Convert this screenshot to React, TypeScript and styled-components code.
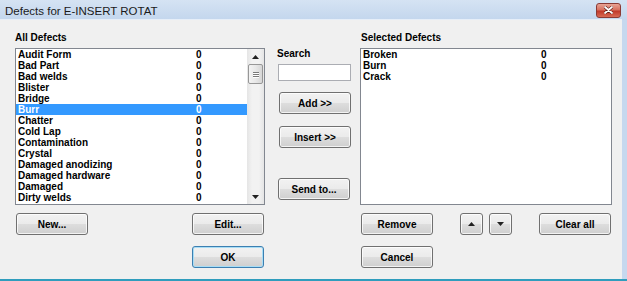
import React from 'react';
import styled, { createGlobalStyle } from 'styled-components';

const GlobalStyle = createGlobalStyle`
    html, body {
        margin: 0;
        padding: 0;
        background: #f0f0f0;
        overflow: hidden;
    }
`;

const Window = styled.div`
    width: 627px;
    height: 281px;
    box-sizing: border-box;
    display: flex;
    flex-direction: column;
    background: #c6d8ee;
    font-family: "Liberation Sans", Arial, sans-serif;
`;

const TitleBar = styled.div`
    height: 20px;
    flex: none;
    display: flex;
    align-items: center;
    justify-content: space-between;
    padding: 0 6px 0 5px;
    background: linear-gradient(#d5e3f3, #c3d6ed);
`;

const TitleText = styled.span`
    font-size: 11.5px;
    color: #1b1b1b;
    padding-top: 1px;
`;

const CloseBtn = styled.div`
    width: 25px;
    height: 15px;
    box-sizing: border-box;
    border: 1px solid #8a3a35;
    border-radius: 3px;
    background: linear-gradient(#e8a495 0%, #d7705f 45%, #c0392b 55%, #d86a55 100%);
    display: flex;
    align-items: center;
    justify-content: center;
`;

const Frame = styled.div`
    flex: 1;
    display: flex;
    padding-right: 5px;
    border-bottom: 2px solid #2f9dbd;
`;

const Body = styled.div`
    flex: 1;
    display: flex;
    padding: 12px 0 0 15px;
    background: #f0f0f0;
    border-top: 1px solid #e6eef8;
    margin-top: -1px;
`;

const Column = styled.div<{ $w: number; $ml?: number; $pt?: number }>`
    width: ${p => p.$w}px;
    margin-left: ${p => p.$ml ?? 0}px;
    padding-top: ${p => p.$pt ?? 0}px;
    display: flex;
    flex-direction: column;
`;

const Label = styled.div<{ $pl?: number }>`
    font-size: 10px;
    font-weight: bold;
    line-height: 12px;
    height: 12px;
    padding-left: ${p => p.$pl ?? 0}px;
    color: #000;
`;

const ListBox = styled.div`
    margin-top: 4px;
    height: 157px;
    box-sizing: border-box;
    border: 1px solid #828790;
    background: #fff;
    display: flex;
`;

const Items = styled.div`
    flex: 1;
    padding-top: 0;
`;

const Row = styled.div<{ $sel?: boolean }>`
    display: grid;
    grid-template-columns: 178px 1fr;
    height: 11px;
    line-height: 11px;
    padding-left: 2px;
    font-size: 10px;
    font-weight: bold;
    color: ${p => (p.$sel ? '#fff' : '#000')};
    background: ${p => (p.$sel ? '#3399ff' : 'transparent')};
    white-space: nowrap;
`;

const ScrollBar = styled.div`
    width: 17px;
    display: flex;
    flex-direction: column;
    background: linear-gradient(90deg, #e5e5e5, #f2f2f2 30%, #f2f2f2 70%, #e5e5e5);
`;

const ScrollArrow = styled.div`
    height: 15px;
    display: flex;
    align-items: center;
    justify-content: center;
`;

const Track = styled.div`
    flex: 1;
    position: relative;
`;

const Thumb = styled.div`
    position: absolute;
    left: 1px;
    right: 1px;
    top: 0;
    height: 20px;
    box-sizing: border-box;
    border: 1px solid #979797;
    border-radius: 2px;
    background: linear-gradient(90deg, #f3f3f3, #e8e8e8 50%, #d6d6d6);
    display: flex;
    flex-direction: column;
    align-items: center;
    justify-content: center;
    gap: 1px;
`;

const Grip = styled.div`
    width: 6px;
    height: 1px;
    background: #7a7a7a;
    box-shadow: 0 1px 0 #fff;
`;

const BtnRow = styled.div<{ $mt: number; $end?: boolean }>`
    margin-top: ${p => p.$mt}px;
    display: flex;
    align-items: center;
    justify-content: ${p => (p.$end ? 'flex-end' : 'space-between')};
    padding-right: 1px;
    padding-left: 1px;
`;

const Btn = styled.button<{ $w?: number; $mt?: number; $default?: boolean }>`
    width: ${p => p.$w ?? 72}px;
    height: 22px;
    margin: ${p => p.$mt ?? 0}px 0 0 0;
    padding: 0;
    box-sizing: border-box;
    border: 1px solid ${p => (p.$default ? '#3c7fb1' : '#707070')};
    border-radius: 3px;
    background: linear-gradient(#f2f2f2 0%, #ebebeb 48%, #dddddd 52%, #cfcfcf 100%);
    box-shadow: inset 0 0 0 1px ${p => (p.$default ? '#a8ddf5' : 'rgba(255,255,255,0.75)')};
    font-family: "Liberation Sans", Arial, sans-serif;
    font-size: 10px;
    font-weight: bold;
    color: #000;
    display: flex;
    align-items: center;
    justify-content: center;
`;

const ArrowGroup = styled.div`
    display: flex;
    gap: 6px;
`;

const SearchInput = styled.input`
    margin: 4px 0 0 1px;
    width: 73px;
    height: 17px;
    box-sizing: border-box;
    border: 1px solid #abadb3;
    border-top-color: #abadb3;
    background: #fff;
    outline: none;
    padding: 0 2px;
`;

const Tri = ({ up }: { up?: boolean }) => (
    <svg width="7" height="4" viewBox="0 0 7 4">
        <polygon points={up ? '3.5,0 7,4 0,4' : '0,0 7,0 3.5,4'} fill="#222" />
    </svg>
);

const allDefects = [
    'Audit Form', 'Bad Part', 'Bad welds', 'Blister', 'Bridge', 'Burr', 'Chatter',
    'Cold Lap', 'Contamination', 'Crystal', 'Damaged anodizing', 'Damaged hardware',
    'Damaged', 'Dirty welds',
];
const selectedDefects = ['Broken', 'Burn', 'Crack'];

const App = () => {
    return (
        <>
            <GlobalStyle />
            <Window>
                <TitleBar>
                    <TitleText>Defects for E-INSERT ROTAT</TitleText>
                    <CloseBtn>
                        <svg width="9" height="8" viewBox="0 0 9 8">
                            <path d="M1 1 L8 7 M8 1 L1 7" stroke="#5a1a14" strokeWidth="3" strokeLinecap="round" />
                            <path d="M1 1 L8 7 M8 1 L1 7" stroke="#fff" strokeWidth="1.8" strokeLinecap="round" />
                        </svg>
                    </CloseBtn>
                </TitleBar>
                <Frame>
                    <Body>
                        <Column $w={250}>
                            <Label>All Defects</Label>
                            <ListBox>
                                <Items>
                                    {allDefects.map((d) => (
                                        <Row key={d} $sel={d === 'Burr'}>
                                            <span>{d}</span>
                                            <span>0</span>
                                        </Row>
                                    ))}
                                </Items>
                                <ScrollBar>
                                    <ScrollArrow><Tri up /></ScrollArrow>
                                    <Track>
                                        <Thumb>
                                            <Grip />
                                            <Grip />
                                            <Grip />
                                        </Thumb>
                                    </Track>
                                    <ScrollArrow><Tri /></ScrollArrow>
                                </ScrollBar>
                            </ListBox>
                            <BtnRow $mt={8}>
                                <Btn>New...</Btn>
                                <Btn>Edit...</Btn>
                            </BtnRow>
                            <BtnRow $mt={11} $end>
                                <Btn $default>OK</Btn>
                            </BtnRow>
                        </Column>
                        <Column $w={75} $ml={12} $pt={16}>
                            <Label>Search</Label>
                            <SearchInput />
                            <Btn $mt={11} style={{ marginLeft: 2 }}>Add &gt;&gt;</Btn>
                            <Btn $mt={12} style={{ marginLeft: 2 }}>Insert &gt;&gt;</Btn>
                            <Btn $mt={30} style={{ marginLeft: 1 }}>Send to...</Btn>
                        </Column>
                        <Column $w={252} $ml={8}>
                            <Label $pl={1}>Selected Defects</Label>
                            <ListBox>
                                <Items>
                                    {selectedDefects.map((d) => (
                                        <Row key={d}>
                                            <span>{d}</span>
                                            <span>0</span>
                                        </Row>
                                    ))}
                                </Items>
                            </ListBox>
                            <BtnRow $mt={8}>
                                <Btn>Remove</Btn>
                                <ArrowGroup>
                                    <Btn $w={23}><Tri up /></Btn>
                                    <Btn $w={23}><Tri /></Btn>
                                </ArrowGroup>
                                <Btn>Clear all</Btn>
                            </BtnRow>
                            <BtnRow $mt={11}>
                                <Btn>Cancel</Btn>
                            </BtnRow>
                        </Column>
                    </Body>
                </Frame>
            </Window>
        </>
    );
};

export default App;
